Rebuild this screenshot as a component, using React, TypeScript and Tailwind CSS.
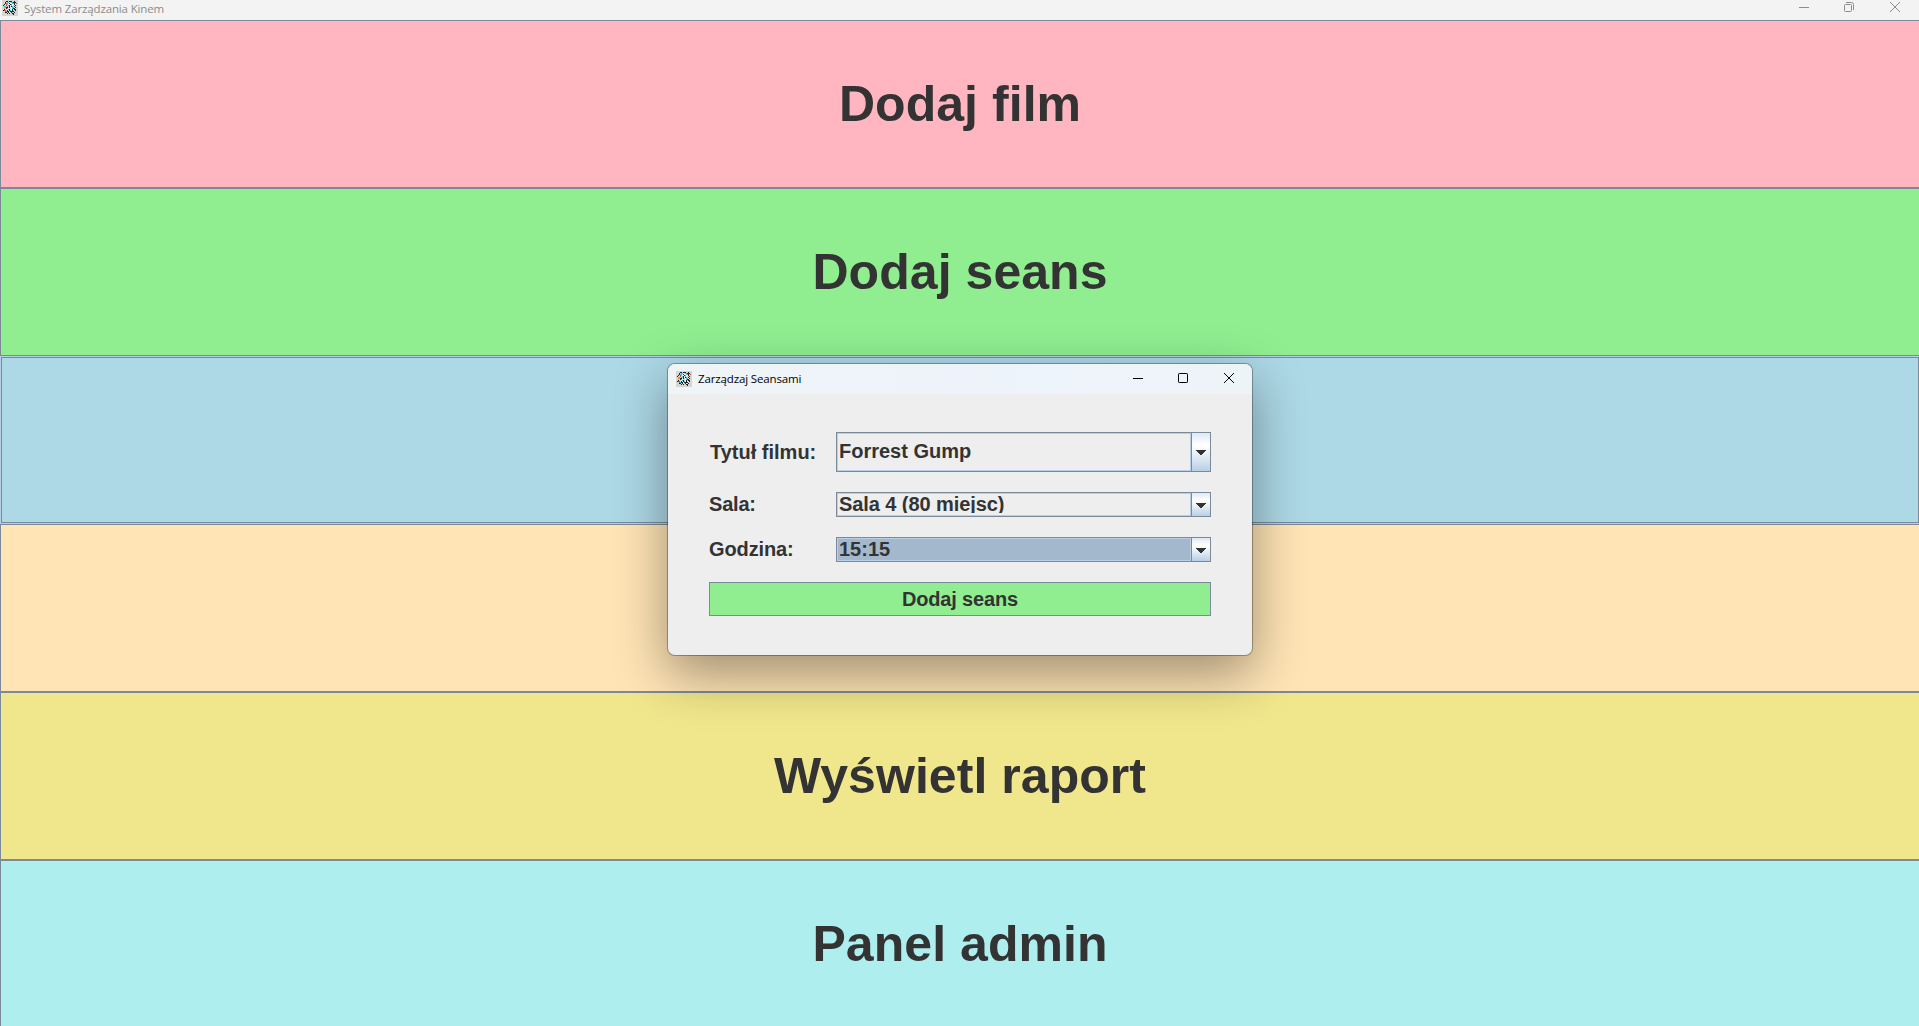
const iconRows = [
  "gggggggggggggggg",
  "ggggkkgkkkggkggg",
  "gggkgccwgcckkkgg",
  "gggkccwkwwcckgrg",
  "ggkgrcwwkcwwkggg",
  "gkggrwckwcwggkgg",
  "ggccgrgkwkcgkggg",
  "ggyckkgkgwccwkgg",
  "ggygkcwggwckkggg",
  "ggkggwckgwkgkkgg",
  "gkrrgkwkcwkggkgg",
  "gggrckkgkkkkgggg",
  "gggkkgkwgkggkggg",
  "gggggkgkggkkgggg",
  "gggggggggggkgggg",
  "gggggggggggggggg",
];

const iconColors: Record<string, string> = {
  g: "#d6d5d0",
  k: "#20272b",
  c: "#45bfd8",
  w: "#eef4f3",
  r: "#cf4a3c",
  y: "#e3ae55",
};

function AppIcon() {
  return (
    <svg width="16" height="16" viewBox="0 0 16 16" shapeRendering="crispEdges" className="block shrink-0">
      {iconRows.map((row, y) =>
        row.split("").map((c, x) => (
          <rect key={`${x}-${y}`} x={x} y={y} width="1" height="1" fill={iconColors[c]} />
        )),
      )}
    </svg>
  );
}

const MinimizeIcon = () => (
  <svg width="10" height="10" viewBox="0 0 10 10" className="block">
    <path d="M0 5.5H10" stroke="currentColor" fill="none" />
  </svg>
);
const MaximizeIcon = () => (
  <svg width="10" height="10" viewBox="0 0 10 10" className="block">
    <rect x="0.5" y="0.5" width="9" height="9" rx="0.7" stroke="currentColor" fill="none" />
  </svg>
);
const RestoreIcon = () => (
  <svg width="10" height="10" viewBox="0 0 10 10" className="block">
    <rect x="0.5" y="2.5" width="7" height="7" rx="1" stroke="currentColor" fill="none" />
    <path d="M2 0.5H7.5Q9.5 0.5 9.5 2.5V8" stroke="currentColor" fill="none" />
  </svg>
);
const CloseIcon = () => (
  <svg width="10" height="10" viewBox="0 0 10 10" className="block">
    <path d="M0 0L10 10M10 0L0 10" stroke="currentColor" fill="none" />
  </svg>
);

function MenuButton({ label, color }: { label: string; color: string }) {
  return (
    <button
      className={`flex h-[168px] w-full shrink-0 items-center justify-center border border-[#7a8a99] text-[50px] leading-[56px] font-bold tracking-[0.05px] ${color}`}
    >
      {label}
    </button>
  );
}

function ComboBox({
  value,
  height,
  text,
  selected,
}: {
  value: string;
  height: string;
  text: string;
  selected?: boolean;
}) {
  return (
    <div className={`flex w-[375px] border border-[#7a8a99] ${height}`}>
      <div
        className={`min-w-0 flex-1 border border-[#b8cfe5] px-px ${selected ? "bg-[#a3b8cc]" : "bg-[#eeeeee]"}`}
      >
        <div className={`overflow-hidden whitespace-nowrap ${text}`}>{value}</div>
      </div>
      <div className="flex w-[19px] items-center justify-center border-l border-[#7a8a99] bg-[linear-gradient(#dde8f3_0%,#ffffff_30%,#ffffff_35%,#b8cfe5_100%)]">
        <svg width="10" height="5" viewBox="0 0 10 5" shapeRendering="crispEdges" className="mt-px block">
          <path d="M0 0H10V1H9V2H8V3H7V4H6V5H4V4H3V3H2V2H1V1H0Z" fill="#333" />
        </svg>
      </div>
    </div>
  );
}

function Dialog() {
  return (
    <section className="absolute top-[363px] left-[667px] h-[293px] w-[586px] overflow-hidden rounded-[8px] border border-black/30 bg-[#eeeeee] bg-clip-padding shadow-[0_18px_52px_rgba(0,0,0,0.38)]">
      <header className="flex h-[30px] items-center bg-[linear-gradient(90deg,#eff4f7,#eef3fb_50%,#edf4f8)] pl-2 text-black">
        <AppIcon />
        <span className="ml-[6px] flex-1 font-['Open_Sans',sans-serif] text-[11.5px] leading-4 tracking-[-0.14px]">
          Zarządzaj Seansami
        </span>
        <div className="mr-[18px] mb-[2px] flex gap-[35px]">
          <MinimizeIcon />
          <MaximizeIcon />
          <div className="ml-px">
            <CloseIcon />
          </div>
        </div>
      </header>
      <div className="flex flex-col gap-5 px-[41px] pt-[38px] text-[20px] leading-[22px] font-bold">
        <div className="flex h-10 items-center">
          <label className="w-[127px] pb-px pl-px">Tytuł filmu:</label>
          <ComboBox value="Forrest Gump" height="h-10" text="pt-[6px] leading-[22px]" />
        </div>
        <div className="flex h-[25px] items-center">
          <label className="w-[127px] pb-[2px] tracking-[-0.2px]">Sala:</label>
          <ComboBox value="Sala 4 (80 miejsc)" height="h-[25px]" text="h-[19px] leading-5 tracking-[-0.08px]" />
        </div>
        <div className="flex h-[25px] items-center">
          <label className="w-[127px] pb-[2px] tracking-[-0.12px]">Godzina:</label>
          <ComboBox value="15:15" height="h-[25px]" text="leading-5" selected />
        </div>
        <button className="h-[34px] w-[502px] border border-[#7a8a99] bg-[#90ee90] tracking-[-0.15px]">
          Dodaj seans
        </button>
      </div>
    </section>
  );
}

export default function App() {
  return (
    <div className="relative h-[1026px] w-[1919px] overflow-hidden bg-[#f3f3f3] font-['Liberation_Sans',Arial,sans-serif] text-[#333333]">
      <header className="flex h-5 items-start bg-[#f3f3f3] pl-[2px] text-[#8c8c8c]">
        <AppIcon />
        <span className="ml-[6px] flex-1 font-['Open_Sans',sans-serif] text-[11.5px] leading-[17px] tracking-[-0.14px]">
          System Zarządzania Kinem
        </span>
        <div className="mt-[2px] mr-[19px] flex gap-[35px]">
          <MinimizeIcon />
          <RestoreIcon />
          <div className="ml-px">
            <CloseIcon />
          </div>
        </div>
      </header>
      <main className="flex w-[1920px] flex-col">
        <MenuButton label="Dodaj film" color="bg-[#ffb6c1]" />
        <MenuButton label="Dodaj seans" color="bg-[#90ee90]" />
        <div className="h-[168px] shrink-0 border border-[#b8cfe5] bg-[#add8e6]">
          <div className="h-full border border-[#7a8a99]" />
        </div>
        <MenuButton label="" color="bg-[#ffe4b5]" />
        <MenuButton label="Wyświetl raport" color="bg-[#f0e68c]" />
        <MenuButton label="Panel admin" color="bg-[#afeeee]" />
      </main>
      <Dialog />
    </div>
  );
}
